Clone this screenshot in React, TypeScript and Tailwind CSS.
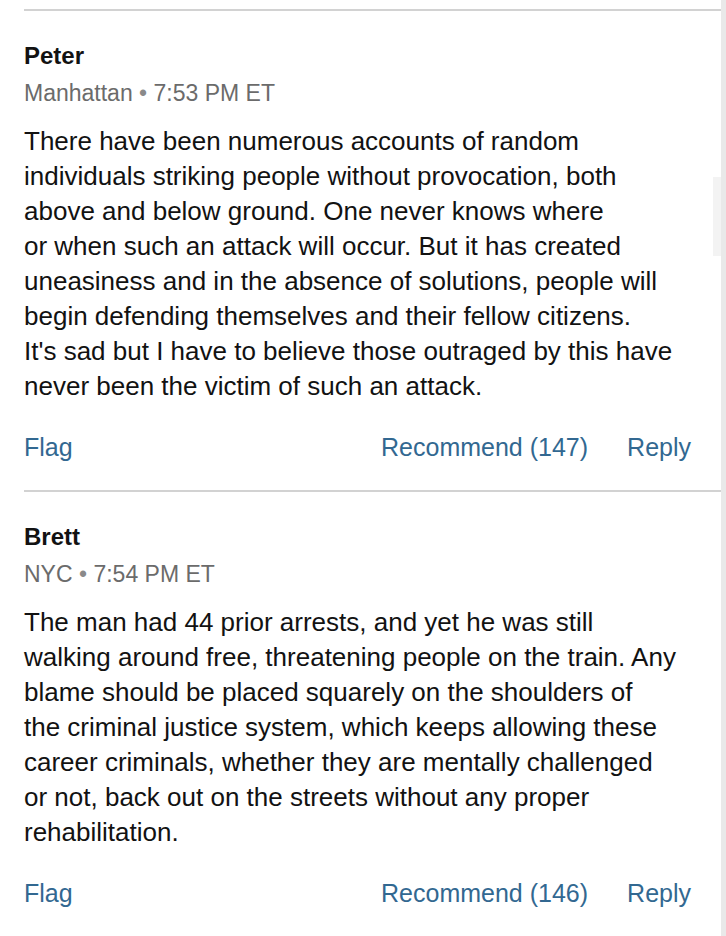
type Comment = {
  name: string
  location: string
  time: string
  lines: string[]
  recommends: number
}

const comments: Comment[] = [
  {
    name: "Peter",
    location: "Manhattan",
    time: "7:53 PM ET",
    lines: [
      "There have been numerous accounts of random",
      "individuals striking people without provocation, both",
      "above and below ground. One never knows where",
      "or when such an attack will occur. But it has created",
      "uneasiness and in the absence of solutions, people will",
      "begin defending themselves and their fellow citizens.",
      "It's sad but I have to believe those outraged by this have",
      "never been the victim of such an attack.",
    ],
    recommends: 147,
  },
  {
    name: "Brett",
    location: "NYC",
    time: "7:54 PM ET",
    lines: [
      "The man had 44 prior arrests, and yet he was still",
      "walking around free, threatening people on the train. Any",
      "blame should be placed squarely on the shoulders of",
      "the criminal justice system, which keeps allowing these",
      "career criminals, whether they are mentally challenged",
      "or not, back out on the streets without any proper",
      "rehabilitation.",
    ],
    recommends: 146,
  },
]

function CommentItem({ c }: { c: Comment }) {
  return (
    <div className="border-t-2 border-[#d2d2d2] pt-[30px] pb-[28px]">
      <div className="text-[24px] leading-[30px] font-bold text-[#121212]">{c.name}</div>
      <div className="mt-[7px] text-[23px] leading-[30px] text-[#6b6b6b]">
        {c.location} <span className="text-[#8a8a8a]">•</span> {c.time}
      </div>
      <p className="mt-[16px] text-[26px] leading-[35px] text-[#121212]">
        {c.lines.map((l, i) => (
          <span key={i} className="block whitespace-nowrap">
            {l}
          </span>
        ))}
      </p>
      <div className="mt-[28px] flex items-center pr-[30px] text-[25px] leading-[30px] text-[#326891]">
        <button className="cursor-pointer">Flag</button>
        <div className="ml-auto flex gap-[39px]">
          <button className="cursor-pointer">Recommend ({c.recommends})</button>
          <button className="cursor-pointer">Reply</button>
        </div>
      </div>
    </div>
  )
}

export default function App() {
  return (
    <div className="relative flex h-[936px] overflow-hidden bg-white font-['Liberation_Sans',Arial,sans-serif]">
      <div className="min-w-0 flex-1 pt-[9px] pl-[24px]">
        {comments.map((c) => (
          <CommentItem key={c.name} c={c} />
        ))}
      </div>
      <div className="w-[5px] bg-[#e9e9e9]" />
      <div className="absolute top-[177px] right-[5px] h-[79px] w-[8px] bg-[#f3f3f3]" />
    </div>
  )
}
